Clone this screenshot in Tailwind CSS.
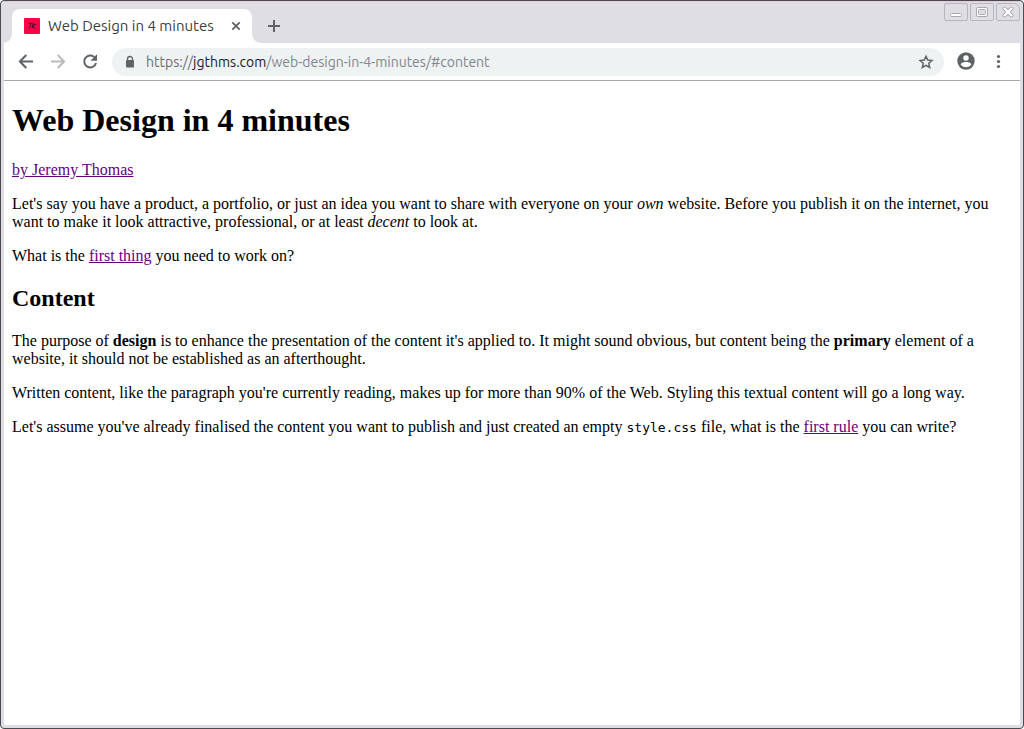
<!DOCTYPE html>
<html lang="en">
<head>
<meta charset="utf-8">
<meta name="viewport" content="width=device-width, initial-scale=1">
<title>Web Design in 4 minutes</title>
<script src="https://cdn.jsdelivr.net/npm/@tailwindcss/browser@4"></script>
</head>
<body class="bg-white">
<div class="flex min-h-screen flex-col rounded-sm border border-[#4b4a50] bg-[#dedee4] px-[3px] pb-[3px] font-['Ubuntu','Noto_Sans',sans-serif]">
  <header>
    <div class="flex h-[42px] items-start border-t border-[#d8cdd8]">
      <div class="mt-[7px] flex h-[34px] items-end">
        <div class="h-2 w-2 bg-[radial-gradient(circle_at_0_0,#dedee4_7px,white_8px)]"></div>
        <div class="flex h-full w-60 items-center rounded-t-lg bg-white pl-3 pr-2">
          <svg class="mr-2 size-4 shrink-0" viewBox="0 0 16 16" aria-hidden="true">
            <rect width="16" height="16" rx="1" fill="#ff0348"/>
            <path d="M4.200 5.600 8.500 5M6.900 5.500 6.200 8.600 4.600 10.300M8 7.200 11.700 6.500M9.800 5.200 8.200 9.800M7.600 9.300 10.300 8.500M9.300 9 11.200 11" fill="none" stroke="#35142f" stroke-width="1"/>
          </svg>
          <span class="grow whitespace-nowrap text-[15px] leading-5 text-[#3c4043]">Web Design in 4 minutes</span>
          <button type="button" aria-label="Close tab" class="flex size-4 items-center justify-center text-[#5f6368]">
            <svg class="size-4" viewBox="0 0 16 16" fill="none" stroke="currentColor" stroke-width="1.8"><path d="m4.300 4.300 7.400 7.400m0-7.400-7.400 7.400"/></svg>
          </button>
        </div>
        <div class="h-2 w-2 bg-[radial-gradient(circle_at_100%_0,#dedee4_7px,white_8px)]"></div>
      </div>
      <button type="button" aria-label="New tab" class="mt-4 ml-1.5 flex size-4 items-center justify-center text-[#5f6368]">
        <svg class="size-4" viewBox="0 0 16 16" fill="none" stroke="currentColor" stroke-width="2"><path d="M8 2v12M2 8h12"/></svg>
      </button>
      <div class="ml-auto mt-px flex gap-0.5">
        <button type="button" aria-label="Minimize" class="flex h-[18px] w-6 items-center justify-center rounded-xs border border-[#b7b6bf]">
          <svg class="h-4 w-[22px]" viewBox="0 0 22 16"><rect x="5.500" y="9.500" width="11" height="3" rx="1" fill="white" stroke="#aaa9b2"/></svg>
        </button>
        <button type="button" aria-label="Maximize" class="flex h-[18px] w-6 items-center justify-center rounded-xs border border-[#b7b6bf]">
          <svg class="h-4 w-[22px]" viewBox="0 0 22 16"><rect x="5.500" y="3.500" width="11" height="9" rx="1.500" fill="white" stroke="#aaa9b2"/><rect x="7.500" y="5.500" width="7" height="5" rx="1" fill="#dedee4" stroke="#aaa9b2"/></svg>
        </button>
        <button type="button" aria-label="Close" class="flex h-[18px] w-6 items-center justify-center rounded-xs rounded-tr-md border border-[#b7b6bf]">
          <svg class="h-4 w-[22px]" viewBox="0 0 22 16" fill="none" stroke-linecap="round"><path d="m7.500 4.500 7 7m0-7-7 7" stroke="#aaa9b2" stroke-width="4"/><path d="m7.500 4.500 7 7m0-7-7 7" stroke="white" stroke-width="2.200"/></svg>
        </button>
      </div>
    </div>
    <div class="flex h-[38px] items-center border-b border-[#a9a8a9] bg-white px-3.5 text-[#5f6368]">
      <button type="button" aria-label="Back" class="mr-4 size-4">
        <svg class="size-4" viewBox="0 0 16 16" fill="none" stroke="currentColor" stroke-width="2"><path d="M15 7.500H2.500M8.300 1 1.900 7.500l6.400 6.500"/></svg>
      </button>
      <button type="button" aria-label="Forward" class="mr-4 size-4 text-[#b9babd]">
        <svg class="size-4" viewBox="0 0 16 16" fill="none" stroke="currentColor" stroke-width="2"><path d="M1 7.500h12.500M7.700 1 14.100 7.500l-6.400 6.500"/></svg>
      </button>
      <button type="button" aria-label="Reload" class="mr-3.5 size-4">
        <svg class="size-4" viewBox="0 0 16 16" fill="none"><path d="M14 9A6 6 0 1 1 12.400 3.100" stroke="currentColor" stroke-width="2"/><path d="M15 .2v6.500H8.500z" fill="currentColor"/></svg>
      </button>
      <div class="flex h-7 min-w-0 grow items-center rounded-full bg-[#eff2f3] px-2.5">
        <svg class="mr-2 size-4 shrink-0" viewBox="0 0 16 16" aria-hidden="true"><rect x="4" y="6" width="8" height="7.500" rx="1" fill="currentColor"/><path d="M5.500 6.500V5a2.500 2.500 0 0 1 5 0v1.500" fill="none" stroke="currentColor" stroke-width="1.300"/></svg>
        <a href="#content" class="grow truncate text-[14px] leading-5 text-[#80868b]"><span class="text-[#6a6e73]">https://</span><span class="text-[#202124]">jgthms.com</span>/web-design-in-4-minutes/#content</a>
        <button type="button" aria-label="Bookmark this page" class="size-4">
          <svg class="size-4" viewBox="0 0 16 16" fill="none" stroke="currentColor" stroke-width="1.500"><path d="m8 2.300 1.700 3.800 4.200.4-3.100 2.800.9 4.200L8 11.300l-3.700 2.200.9-4.200-3.100-2.800 4.200-.4z"/></svg>
        </button>
      </div>
      <button type="button" aria-label="Profile" class="ml-3 size-5">
        <svg class="size-5" viewBox="0 0 20 20"><circle cx="10" cy="9" r="8.700" fill="currentColor"/><circle cx="10" cy="6" r="2.700" fill="white"/><path d="M4.600 12.300C5.500 10.600 8 10 10 10s4.500.6 5.400 2.300C14.200 14.200 12.200 15.200 10 15.200s-4.200-1-5.400-2.900z" fill="white"/></svg>
      </button>
      <button type="button" aria-label="Menu" class="ml-3.5 size-4">
        <svg class="size-4" viewBox="0 0 16 16" fill="currentColor"><circle cx="8.500" cy="2.500" r="1.600"/><circle cx="8.500" cy="7.500" r="1.600"/><circle cx="8.500" cy="12.500" r="1.600"/></svg>
      </button>
    </div>
  </header>
  <main class="grow bg-white px-2 pt-[21px] font-['Liberation_Serif',serif] text-[16px] leading-[18px] text-black">
    <h1 class="mb-[22px] text-[32px] leading-[37px] font-bold">Web Design in 4 minutes</h1>
    <p class="mb-4"><a href="#author" class="text-[#660080] underline">by Jeremy Thomas</a></p>
    <p class="mb-4">Let's say you have a product, a portfolio, or just an idea you want to share with everyone on your <em>own</em> website. Before you publish it on the internet, you want to make it look attractive, professional, or at least <em>decent</em> to look at.</p>
    <p class="mb-5">What is the <a href="#content" class="text-[#660080] underline">first thing</a> you need to work on?</p>
    <h2 id="content" class="mb-5 text-[24px] leading-[27px] font-bold">Content</h2>
    <p class="mb-4">The purpose of <strong>design</strong> is to enhance the presentation of the content it's applied to. It might sound obvious, but content being the <strong>primary</strong> element of a website, it should not be established as an afterthought.</p>
    <p class="mb-4">Written content, like the paragraph you're currently reading, makes up for more than 90% of the Web. Styling this textual content will go a long way.</p>
    <p class="mb-4">Let's assume you've already finalised the content you want to publish and just created an empty <code class="font-['DejaVu_Sans_Mono',monospace] text-[13px]">style.css</code> file, what is the <a href="#rule" class="text-[#660080] underline">first rule</a> you can write?</p>
  </main>
</div>
</body>
</html>
